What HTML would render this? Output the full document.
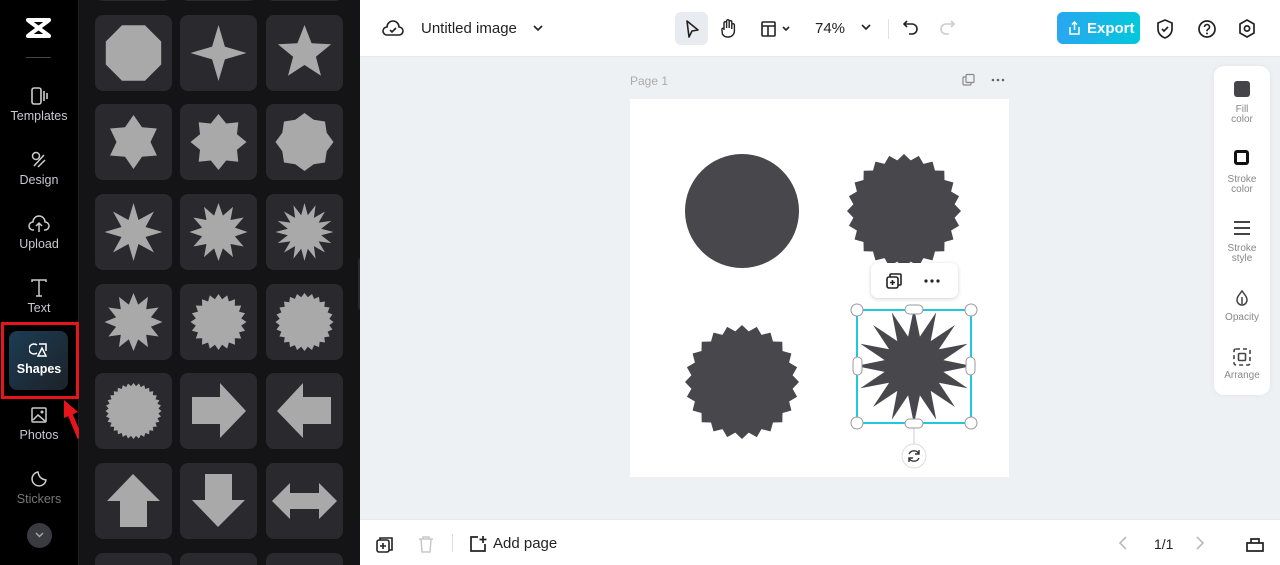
<!DOCTYPE html>
<html><head><meta charset="utf-8"><style>
*{margin:0;padding:0;box-sizing:border-box}
html{width:1280px;height:565px;overflow:hidden}
body{width:1280px;height:565px;overflow:hidden;font-family:"Liberation Sans",sans-serif;background:#eef1f4;position:relative}
.abs{position:absolute}
#side{left:0;top:0;width:79px;height:565px;background:#000;border-right:1px solid #1e1e22}
#panel{left:79px;top:0;width:281px;height:565px;background:#141417}
.nav{position:absolute;left:0;width:78px;text-align:center;color:#c9c9cf;font-size:12.5px}
.nav svg{display:block;margin:0 auto 3px}
#top{left:360px;top:0;width:920px;height:57px;background:#fff;border-bottom:1px solid #e6e8eb}
#bot{left:360px;top:519px;width:920px;height:46px;background:#fff;border-top:1px solid #e6e8eb;overflow:hidden}
.t{position:absolute;color:#222;font-size:15px}
.rp{position:absolute;width:56px;text-align:center;font-size:10px;color:#888;line-height:10px}
</style></head><body>
<div id="side" class="abs">
 <svg class="abs" style="left:25px;top:17px" width="27" height="22" viewBox="0 0 27 22"><path d="M3 3 L24 3 M3 19 L24 19 M4 4 L23 18 M23 4 L4 18" stroke="#fff" stroke-width="4" fill="none" stroke-linecap="round"/></svg>
 <div class="abs" style="left:26px;top:57px;width:25px;height:1px;background:#444"></div>
 <div class="nav" style="top:86px"><svg width="18" height="20" viewBox="0 0 18 20"><rect x="2" y="2" width="9" height="16" rx="2" fill="none" stroke="#ccc" stroke-width="1.6"/><path d="M14 5v10M17 7v6" stroke="#ccc" stroke-width="1.6"/></svg>Templates</div>
 <div class="nav" style="top:150px"><svg width="18" height="20" viewBox="0 0 18 20"><circle cx="6" cy="6" r="3.5" fill="none" stroke="#ccc" stroke-width="1.5"/><path d="M4 16 L14 5 M8 17 L15 10" stroke="#ccc" stroke-width="1.5"/></svg>Design</div>
 <div class="nav" style="top:214px"><svg width="22" height="20" viewBox="0 0 22 20"><path d="M6 16 H5 a4 4 0 0 1 0-8 a6 6 0 0 1 12 0 a4 4 0 0 1 0 8 h-1 M11 18 V9 M8 12 l3-3 3 3" fill="none" stroke="#ccc" stroke-width="1.5"/></svg>Upload</div>
 <div class="nav" style="top:278px"><svg width="20" height="20" viewBox="0 0 20 20"><path d="M3 4V2h14v2M10 2v16M7 18h6" fill="none" stroke="#ccc" stroke-width="1.5"/></svg>Text</div>
 <div class="abs" style="left:9px;top:331px;width:59px;height:59px;border-radius:8px;background:linear-gradient(135deg,#1c3c54,#1d2228)"></div>
 <div class="nav" style="top:341px;color:#fff;font-weight:bold"><svg width="20" height="18" viewBox="0 0 20 18"><path d="M8 4a5 5 0 1 0 0 8 M9 15 L13 7 L17 15Z M10 3h7v7" fill="none" stroke="#fff" stroke-width="1.5"/></svg>Shapes</div>
 <div class="abs" style="left:1px;top:322px;width:78px;height:77px;border:3px solid #e8141c"></div>
 <svg class="abs" style="left:60px;top:398px" width="26" height="44" viewBox="0 0 26 44"><path d="M20 40 L10 16" stroke="#e8141c" stroke-width="5"/><path d="M4 2 L18 14 L4 20Z" fill="#e8141c"/></svg>
 <div class="nav" style="top:405px"><svg width="18" height="20" viewBox="0 0 18 20"><rect x="2" y="3" width="14" height="14" rx="1" fill="none" stroke="#ccc" stroke-width="1.5"/><path d="M3 15 L8 10 L15 16" fill="none" stroke="#ccc" stroke-width="1.5"/><circle cx="12" cy="7" r="1.5" fill="#ccc"/></svg>Photos</div>
 <div class="nav" style="top:469px;color:#777"><svg width="20" height="20" viewBox="0 0 20 20"><path d="M17 11 A7 7 0 1 1 9 3 Q10 10 17 11Z" fill="none" stroke="#ccc" stroke-width="1.5"/></svg>Stickers</div>
 <div class="abs" style="left:27px;top:523px;width:25px;height:25px;border-radius:50%;background:#3a3b40"></div>
 <svg class="abs" style="left:34px;top:531px" width="11" height="8"><path d="M2 2 L5.5 5.5 L9 2" stroke="#aaa" stroke-width="1.4" fill="none"/></svg>
</div>
<div id="panel" class="abs"></div>
<svg id="tiles" class="abs" style="left:0;top:0" width="360" height="565"></svg>

<div id="top" class="abs">
 <svg class="abs" style="left:22px;top:18px" width="22" height="20" viewBox="0 0 22 20"><path d="M6 17 H5 a4 4 0 0 1 0-8 a6 6 0 0 1 12 0 a4 4 0 0 1 0 8 H6Z M8 12 l2 2 4-4" fill="none" stroke="#222" stroke-width="1.6"/></svg>
 <div class="t" style="left:61px;top:20px">Untitled image</div>
 <svg class="abs" style="left:172px;top:24px" width="12" height="9"><path d="M2 2 L6 6 L10 2" stroke="#222" stroke-width="1.6" fill="none"/></svg>
 <div class="abs" style="left:315px;top:12px;width:33px;height:33px;border-radius:6px;background:#e8ebef"></div>
 <svg class="abs" style="left:322px;top:18px" width="20" height="22"><path d="M5 3 L16 12 L10 13 L7 19Z" fill="none" stroke="#222" stroke-width="1.6" stroke-linejoin="round"/></svg>
 <svg class="abs" style="left:359px;top:17px" width="20" height="22" viewBox="0 0 20 22"><path d="M5 13 V6 a1.3 1.3 0 0 1 2.6 0 V11 V4 a1.3 1.3 0 0 1 2.6 0 V11 V5 a1.3 1.3 0 0 1 2.6 0 V12 V8 a1.3 1.3 0 0 1 2.6 0 V14 a6 6 0 0 1-6 6 h-1 a6 6 0 0 1-5-3 L3 13 a1.3 1.3 0 0 1 2-1.5Z" fill="none" stroke="#222" stroke-width="1.4"/></svg>
 <svg class="abs" style="left:400px;top:20px" width="36" height="18"><rect x="2" y="2" width="13" height="14" rx="1" fill="none" stroke="#222" stroke-width="1.6"/><path d="M2 6h13M8 6v10M23 7 l3 3 3-3" fill="none" stroke="#222" stroke-width="1.6"/></svg>
 <div class="t" style="left:455px;top:20px">74%</div>
 <svg class="abs" style="left:500px;top:23px" width="12" height="9"><path d="M2 2 L6 6 L10 2" stroke="#222" stroke-width="1.6" fill="none"/></svg>
 <div class="abs" style="left:528px;top:19px;width:1px;height:20px;background:#e2e2e2"></div>
 <svg class="abs" style="left:542px;top:18px" width="18" height="20"><path d="M5 3 L2 6 L5 9 M2 6 H10 a5 5 0 0 1 0 10 H7" fill="none" stroke="#222" stroke-width="1.6"/></svg>
 <svg class="abs" style="left:578px;top:18px" width="18" height="20"><path d="M13 3 L16 6 L13 9 M16 6 H8 a5 5 0 0 0 0 10 H11" fill="none" stroke="#ccc" stroke-width="1.6"/></svg>
 <div class="abs" style="left:697px;top:12px;width:83px;height:32px;border-radius:6px;background:linear-gradient(90deg,#2aa6f0,#04c8dc)"></div>
 <svg class="abs" style="left:707px;top:20px" width="14" height="16"><path d="M3 7v7h9V7M7.5 2v8M5 4.5 l2.5-2.5 2.5 2.5" fill="none" stroke="#fff" stroke-width="1.5"/></svg>
 <div class="t" style="left:727px;top:20px;color:#fff;font-weight:bold">Export</div>
 <svg class="abs" style="left:795px;top:18px" width="20" height="22"><path d="M10 2 L17 5 V11 C17 16 13 19 10 20 C7 19 3 16 3 11 V5Z M7 11 l2 2 4-4" fill="none" stroke="#222" stroke-width="1.7"/></svg>
 <svg class="abs" style="left:836px;top:18px" width="22" height="22"><circle cx="11" cy="11" r="8" fill="none" stroke="#222" stroke-width="1.7"/><path d="M8.5 9 a2.5 2.5 0 1 1 3.5 2.3 c-1 .5-1 1-1 2" fill="none" stroke="#222" stroke-width="1.6"/><circle cx="11" cy="15.5" r="1" fill="#222"/></svg>
 <svg class="abs" style="left:877px;top:18px" width="20" height="22"><path d="M10 2 L17 6 V15 L10 19 L3 15 V6Z" fill="none" stroke="#222" stroke-width="1.7"/><circle cx="10" cy="10.5" r="2.6" fill="none" stroke="#222" stroke-width="1.7"/></svg>
</div>

<div class="abs" style="left:630px;top:74px;font-size:12px;color:#aaa">Page 1</div>
<svg class="abs" style="left:961px;top:73px" width="50" height="14"><rect x="2" y="4" width="8" height="8" rx="1" fill="none" stroke="#888" stroke-width="1.2"/><rect x="5" y="1.5" width="8" height="8" rx="1" fill="#eef1f4" stroke="#888" stroke-width="1.2"/><circle cx="32" cy="7" r="1.3" fill="#666"/><circle cx="37" cy="7" r="1.3" fill="#666"/><circle cx="42" cy="7" r="1.3" fill="#666"/></svg>
<div class="abs" style="left:630px;top:99px;width:379px;height:378px;background:#fff"></div>
<svg id="cv" class="abs" style="left:0;top:0" width="1280" height="565"></svg>
<div class="abs" style="left:871px;top:263px;width:87px;height:35px;background:#fff;border-radius:7px;box-shadow:0 1px 4px rgba(0,0,0,.18)"></div>
<svg class="abs" style="left:884px;top:271px" width="66" height="20"><rect x="3" y="6" width="11" height="11" rx="2" fill="none" stroke="#222" stroke-width="1.6"/><path d="M6 6V4a1 1 0 0 1 1-1h9a1 1 0 0 1 1 1v9a1 1 0 0 1-1 1h-2M8.5 9v5M6 11.5h5" fill="none" stroke="#222" stroke-width="1.6"/><circle cx="42" cy="10" r="1.6" fill="#222"/><circle cx="48" cy="10" r="1.6" fill="#222"/><circle cx="54" cy="10" r="1.6" fill="#222"/></svg>

<div class="abs" style="left:1214px;top:66px;width:56px;height:329px;background:#fff;border-radius:10px;box-shadow:0 0 6px rgba(0,0,0,.06)"></div>
<div class="abs" style="left:1234px;top:81px;width:16px;height:16px;border-radius:3px;background:#444449"></div>
<div class="rp" style="left:1214px;top:105px">Fill<br>color</div>
<div class="abs" style="left:1234px;top:150px;width:15px;height:15px;border:3px solid #111;border-radius:3px"></div>
<div class="rp" style="left:1214px;top:175px">Stroke<br>color</div>
<svg class="abs" style="left:1232px;top:220px" width="20" height="16"><path d="M2 2h16M2 8h16M2 14h16" stroke="#444" stroke-width="2"/></svg>
<div class="rp" style="left:1214px;top:244px">Stroke<br>style</div>
<svg class="abs" style="left:1234px;top:289px" width="16" height="18"><path d="M8 2 C5 6 3 8 3 11 a5 5 0 0 0 10 0 C13 8 11 6 8 2Z M8 8 V15" fill="none" stroke="#444" stroke-width="1.5"/></svg>
<div class="rp" style="left:1214px;top:313px">Opacity</div>
<svg class="abs" style="left:1232px;top:347px" width="20" height="20"><rect x="2" y="2" width="16" height="16" rx="2" fill="none" stroke="#444" stroke-width="1.6" stroke-dasharray="4 3"/><rect x="6.5" y="6.5" width="7" height="7" rx="1" fill="none" stroke="#444" stroke-width="1.6"/></svg>
<div class="rp" style="left:1214px;top:371px">Arrange</div>

<div id="bot" class="abs">
 <svg class="abs" style="left:15px;top:15px" width="20" height="20"><rect x="2" y="5" width="12" height="12" rx="2" fill="none" stroke="#222" stroke-width="1.6"/><path d="M5 5V3h12v12h-3M8 8v6M5 11h6" fill="none" stroke="#222" stroke-width="1.6"/></svg>
 <svg class="abs" style="left:57px;top:15px" width="18" height="20"><path d="M2 4h14M6 4V2h6v2M4 4l1 13h8l1-13" fill="none" stroke="#c8c8c8" stroke-width="1.5"/></svg>
 <div class="abs" style="left:92px;top:14px;width:1px;height:18px;background:#ddd"></div>
 <svg class="abs" style="left:108px;top:14px" width="20" height="20"><path d="M10 3H3v14h14v-7M15 2v7M11.5 5.5h7" fill="none" stroke="#222" stroke-width="1.7"/></svg>
 <div class="t" style="left:133px;top:15px">Add page</div>
 <svg class="abs" style="left:757px;top:15px" width="12" height="16"><path d="M9 2 L3 8 L9 14" stroke="#bbb" stroke-width="1.6" fill="none"/></svg>
 <div class="t" style="left:794px;top:16px;font-size:14px">1/1</div>
 <svg class="abs" style="left:834px;top:15px" width="12" height="16"><path d="M3 2 L9 8 L3 14" stroke="#bbb" stroke-width="1.6" fill="none"/></svg>
 <svg class="abs" style="left:885px;top:14px" width="20" height="20"><path d="M2 9h16v8H2Z M6 9V5h8v4" fill="none" stroke="#222" stroke-width="1.7"/></svg>
</div>
<script>
function star(cx,cy,n,R,r,rot){rot=rot||-Math.PI/2;let p=[];for(let i=0;i<2*n;i++){let a=rot+i*Math.PI/n,rr=i%2?r:R;p.push((cx+rr*Math.cos(a)).toFixed(1)+','+(cy+rr*Math.sin(a)).toFixed(1));}return p.join(' ');}
function poly(cx,cy,n,R,rot){let p=[];for(let i=0;i<n;i++){let a=rot+i*2*Math.PI/n;p.push((cx+R*Math.cos(a)).toFixed(1)+','+(cy+R*Math.sin(a)).toFixed(1));}return p.join(' ');}
const xs=[95,180,266],ys=[-75,15,104,194,284,373,463,553];
let s='';const G='#a9a9a9';
ys.forEach(y=>xs.forEach(x=>{s+=`<rect x="${x}" y="${y}" width="77" height="76" rx="8" fill="#2a2a2e"/>`}));
function c(col,row){return [xs[col]+38.5,ys[row]+38];}
function P(pts){return `<polygon points="${pts}" fill="${G}"/>`;}
let k;
k=c(0,1);s+=P(poly(k[0],k[1],8,30,Math.PI/8));
k=c(1,1);s+=P(star(k[0],k[1],4,28,9));
k=c(2,1);s+=P(star(k[0],k[1],5,28,12));
k=c(0,2);s+=P(star(k[0],k[1],6,27,17));
k=c(1,2);s+=P(star(k[0],k[1],8,28,20));
k=c(2,2);s+=P(star(k[0],k[1],8,29,24));
k=c(0,3);s+=P(star(k[0],k[1],8,29,13));
k=c(1,3);s+=P(star(k[0],k[1],12,29,17));
k=c(2,3);s+=P(star(k[0],k[1],16,29,17));
k=c(0,4);s+=P(star(k[0],k[1],12,29,18));
k=c(1,4);s+=P(star(k[0],k[1],20,28,23));
k=c(2,4);s+=P(star(k[0],k[1],24,29,25));
k=c(0,5);s+=P(star(k[0],k[1],32,28,25));
let x,y;
x=xs[1];y=ys[5];s+=P(`${x+12},${y+24} ${x+40},${y+24} ${x+40},${y+10} ${x+66},${y+38} ${x+40},${y+65} ${x+40},${y+51} ${x+12},${y+51}`);
x=xs[2];y=ys[5];s+=P(`${x+65},${y+24} ${x+37},${y+24} ${x+37},${y+10} ${x+11},${y+38} ${x+37},${y+65} ${x+37},${y+51} ${x+65},${y+51}`);
x=xs[0];y=ys[6];s+=P(`${x+25},${y+64} ${x+25},${y+38} ${x+12},${y+38} ${x+38},${y+11} ${x+65},${y+38} ${x+52},${y+38} ${x+52},${y+64}`);
x=xs[1];y=ys[6];s+=P(`${x+25},${y+11} ${x+25},${y+37} ${x+12},${y+37} ${x+38},${y+64} ${x+65},${y+37} ${x+52},${y+37} ${x+52},${y+11}`);
x=xs[2];y=ys[6];s+=P(`${x+6},${y+38} ${x+24},${y+20} ${x+24},${y+30} ${x+53},${y+30} ${x+53},${y+20} ${x+71},${y+38} ${x+53},${y+56} ${x+53},${y+46} ${x+24},${y+46} ${x+24},${y+56}`);
s+=`<rect x="358" y="258" width="8" height="52" rx="3" fill="#2a2a2e"/>`;
document.getElementById('tiles').innerHTML=s;
const D='#48474c';let v='';
v+=`<circle cx="742" cy="211" r="57" fill="${D}"/>`;
v+=`<polygon points="${star(904,211,24,57,51)}" fill="${D}"/>`;
v+=`<polygon points="${star(742,382,24,57,51)}" fill="${D}"/>`;
v+=`<polygon points="${star(914,366,16,58,30)}" fill="${D}"/>`;
v+=`<rect x="857" y="310" width="114" height="113" fill="none" stroke="#1ec8de" stroke-width="2"/>`;
v+=`<line x1="914" y1="423" x2="914" y2="444" stroke="#ccc"/>`;
[[857,310],[971,310],[857,423],[971,423]].forEach(p=>v+=`<circle cx="${p[0]}" cy="${p[1]}" r="6" fill="#fff" stroke="#999"/>`);
v+=`<rect x="905" y="305" width="18" height="9" rx="4.5" fill="#fff" stroke="#999"/><rect x="905" y="419" width="18" height="9" rx="4.5" fill="#fff" stroke="#999"/>`;
v+=`<rect x="853" y="357" width="9" height="18" rx="4.5" fill="#fff" stroke="#999"/><rect x="966" y="357" width="9" height="18" rx="4.5" fill="#fff" stroke="#999"/>`;
v+=`<circle cx="914" cy="456" r="12" fill="#fff" stroke="#ddd"/><path d="M909 454 a5.5 5.5 0 0 1 10 0 M919 458 a5.5 5.5 0 0 1 -10 0 M919 450v4h-4 M909 462v-4h4" fill="none" stroke="#333" stroke-width="1.4"/>`;
document.getElementById('cv').innerHTML=v;
</script>
</body></html>
